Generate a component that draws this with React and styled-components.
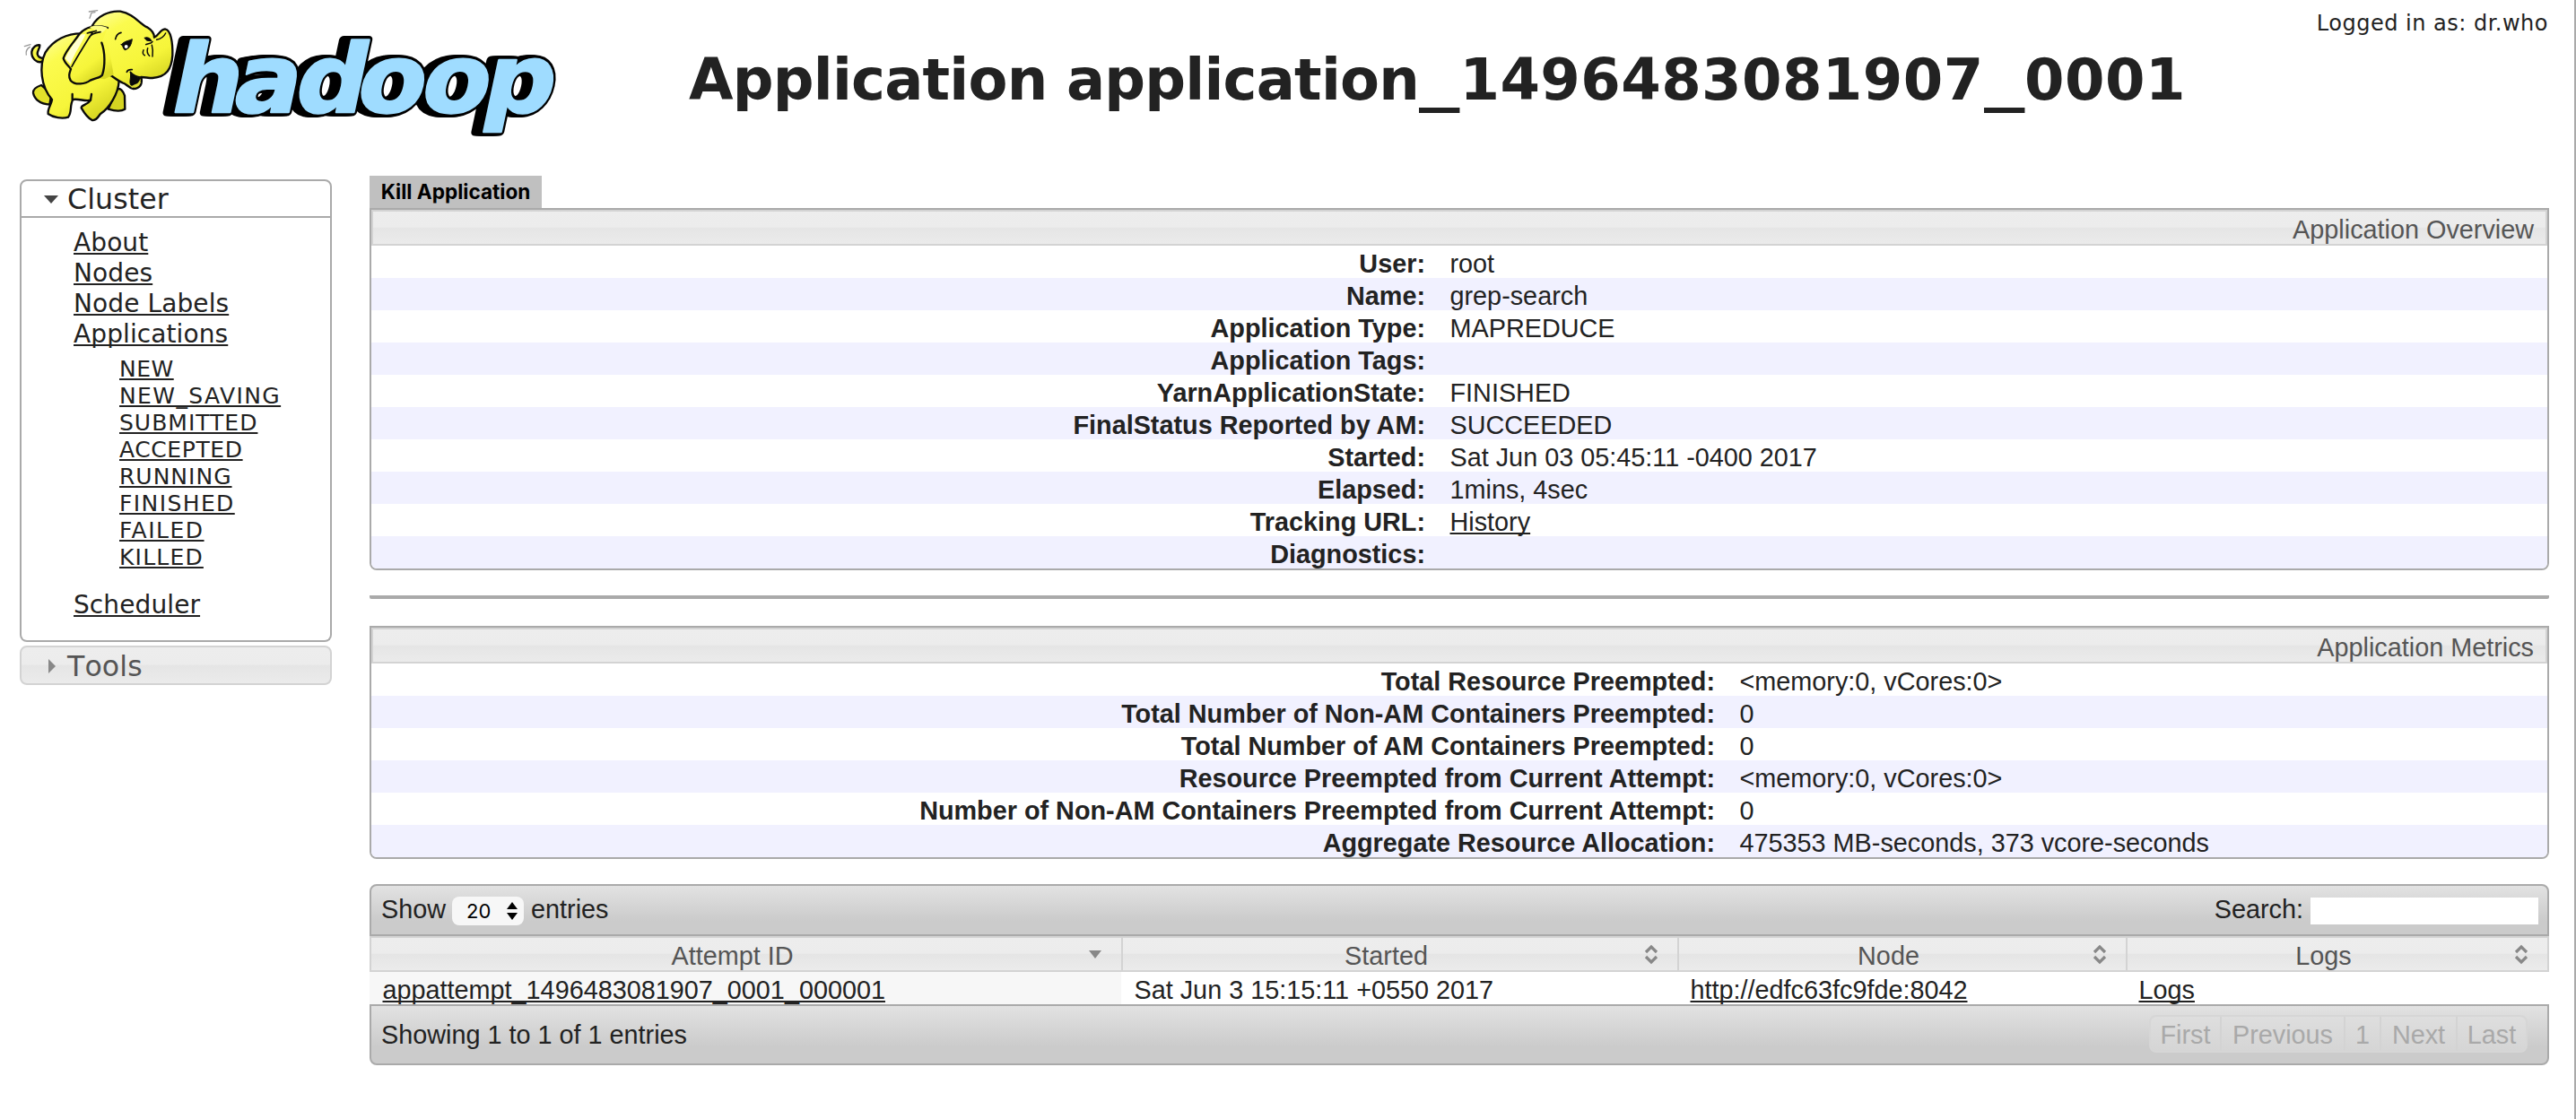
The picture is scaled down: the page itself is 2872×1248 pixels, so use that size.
import React from "react";
import styled, { createGlobalStyle, css } from "styled-components";

const GlobalStyle = createGlobalStyle`
  *, *::before, *::after { box-sizing: border-box; }
  body { margin: 0; background: #fff; color: #222; }
`;

const sans = `"Liberation Sans", Helvetica, Arial, sans-serif`;
const verdana = `"DejaVu Sans", Verdana, sans-serif`;
const system = `Inter, system-ui, sans-serif`;

const glass = css`
  background: linear-gradient(#ededed 0, #ececec 48%, #e5e5e5 50%, #ebebeb 100%);
`;
const soft = css`
  background: linear-gradient(#e2e2e2 0, #cbcbcb 72%, #cbcbcb 100%);
`;

const Page = styled.div`
  width: 2872px;
  height: 1248px;
  overflow: hidden;
  border-right: 2px solid #aaa;
  font: 28.8px/36px ${sans};
`;

const Header = styled.header`
  display: flex;
  align-items: flex-start;
  height: 196px;
  padding-right: 29px;
`;

const LogoArt = styled.svg`
  flex: none;
  width: 640px;
  height: 160px;
  margin-right: 128px;
`;

const Title = styled.h1`
  flex: 1;
  margin: 51px 0 0;
  font: bold 64px/76px ${verdana};
  letter-spacing: -0.8px;
  white-space: nowrap;
`;

const Digits = styled.span`
  letter-spacing: 0.4px;
`;

const Underscore = styled.span`
  display: inline-block;
  width: 45.5px;
  letter-spacing: 0;
  transform: scaleX(1.42);
  transform-origin: left;
`;

const LoggedIn = styled.div`
  margin-top: 12px;
  font: 24px/28px ${verdana};
  letter-spacing: 0.5px;
`;

const Columns = styled.div`
  display: flex;
  align-items: flex-start;
  gap: 42px;
  padding-left: 22px;
`;

const Sidebar = styled.nav`
  width: 348px;
  margin-top: 4px;
  font-family: ${verdana};
`;

const NavHeading = styled.div`
  display: flex;
  align-items: center;
  height: ${(p) => (p.$open ? 43 : 44)}px;
  padding: 1px 0 0 24px;
  border: 2px solid ${(p) => (p.$open ? "#aaa" : "#d3d3d3")};
  border-radius: ${(p) => (p.$open ? "8px 8px 0 0" : "8px")};
  margin-top: ${(p) => (p.$open ? 0 : 4)}px;
  font-size: 31.6px;
  font-kerning: none;
  line-height: 40px;
  letter-spacing: 0.1px;
  color: ${(p) => (p.$open ? "#222" : "#555")};
  ${(p) => !p.$open && glass}
`;

const NavArrow = styled.svg`
  width: 18px;
  height: 18px;
  margin: 0 9px 0 0;
  fill: ${(p) => p.$tone};
`;

const NavBody = styled.div`
  height: 473px;
  padding: 11px 0 0 58px;
  border: 2px solid #aaa;
  border-top: 0;
  border-radius: 0 0 8px 8px;
`;

const NavList = styled.ul`
  list-style: none;
  margin: 0;
  padding: 0;
  font-size: 28px;
  line-height: 34px;
  letter-spacing: 0.1px;
`;

const SubList = styled(NavList)`
  margin: 7px 0 21px;
  padding-left: 51px;
  font-size: 25px;
  line-height: 30px;
`;

const SubItem = styled.li`
  letter-spacing: ${(p) => p.$tracking}px;
`;

const Link = styled.a`
  color: inherit;
  text-decoration: underline;
  text-decoration-thickness: 2px;
  text-underline-offset: 2px;
  text-decoration-skip-ink: none;
`;

const Main = styled.main`
  width: 2430px;
`;

const KillButton = styled.button`
  display: block;
  width: 192px;
  height: 36px;
  padding: 0;
  border: 0;
  background: #c0c0c0;
  color: #000;
  font: bold 22.6px/34px ${system};
  text-align: center;
  white-space: nowrap;
`;

const Panel = styled.section`
  border: 2px solid #aaa;
  border-radius: 0 0 8px 8px;
  overflow: hidden;
`;

const PanelTitle = styled.div`
  height: 40px;
  padding: 2px 13px 0 0;
  border: 2px solid #d3d3d3;
  color: #555;
  line-height: 36px;
  text-align: right;
  ${glass}
`;

const InfoRow = styled.div`
  display: grid;
  grid-template-columns: ${(p) => p.$split}px 1fr;
  height: 36px;
  padding-top: 2px;
  background: #fff;
  &:nth-child(odd) { background: #f1f1ff; }
`;

const InfoLabel = styled.div`
  padding-right: 14px;
  font-weight: bold;
  text-align: right;
`;

const InfoValue = styled.div`
  padding-left: 13.5px;
`;

const Divider = styled.div`
  height: 4px;
  margin: 28px 0 30px;
  background: #aaa;
  border-radius: 0 0 2px 2px;
`;

const TableBox = styled.section`
  margin-top: 28px;
`;

const Bar = styled.div`
  display: flex;
  align-items: center;
  justify-content: space-between;
  height: ${(p) => (p.$bottom ? 68 : 58)}px;
  padding: 0 ${(p) => (p.$bottom ? 22 : 10)}px 0 11px;
  border: 2px solid #aaa;
  border-radius: ${(p) => (p.$bottom ? "0 0 8px 8px" : "8px 8px 0 0")};
  ${soft}
`;

const BarGroup = styled.label`
  display: flex;
  align-items: center;
  padding-bottom: 2px;
`;

const SelectBox = styled.span`
  display: flex;
  align-items: center;
  justify-content: space-between;
  width: 80px;
  height: 32px;
  margin: 4px 8px 0 7px;
  padding: 0 7px 0 16px;
  border-radius: 8px;
  background: #f7f7f7;
  color: #000;
  font: 22px/32px ${system};
`;

const SearchInput = styled.input`
  width: 254px;
  height: 30px;
  margin: 3px 0 0 8px;
  padding: 0;
  border: 0;
  background: #fff;
`;

const HeadRow = styled.div`
  display: grid;
  grid-template-columns: 838px 620px 500px 470px;
  height: 40px;
  border: 2px solid #d3d3d3;
  border-right: 0;
  ${glass}
`;

const HeadCell = styled.div`
  display: flex;
  align-items: center;
  height: 36px;
  padding: 2px 21px 0 6px;
  border-right: 2px solid #d3d3d3;
  color: #555;
  span { flex: 1; padding-top: 1px; text-align: center; }
`;

const SortIcon = styled.svg`
  width: 16px;
  height: 24px;
  margin-top: -2px;
  fill: none;
  stroke: #888;
  stroke-width: 3.2;
`;

const BodyRow = styled.div`
  display: grid;
  grid-template-columns: 838px 620px 500px 472px;
  grid-template-rows: 36px;
  height: 36px;
`;

const BodyCell = styled.div`
  height: 36px;
  padding: 2px 0 0 14.5px;
  background: ${(p) => (p.$sorted ? "#f7f7f7" : "#fff")};
`;

const Pager = styled.div`
  display: flex;
  height: 42px;
  margin-top: -2px;
  border: 2px solid #d6d6d6;
  border-radius: 8px;
  background: linear-gradient(#dedede, #d5d5d5);
  color: #a9a9a9;
`;

const PagerItem = styled.span`
  width: ${(p) => p.$w}px;
  line-height: 41px;
  text-align: center;
  & + & { border-left: 2px solid #d3d3d3; }
`;

function HadoopLogo() {
  const word = {
    x: "179 246 312 378.5 447.5 514",
    y: 125,
    fontFamily: "DejaVu Sans",
    fontWeight: "bold",
    fontSize: 106,
    strokeLinejoin: "round",
  };
  return (
    <LogoArt viewBox="0 0 640 160" role="img" aria-label="hadoop">
      <defs>
        <linearGradient id="hide" x1="0" y1="0" x2="0.6" y2="1">
          <stop offset="0" stopColor="#ffffa8" />
          <stop offset="0.3" stopColor="#fbfb4e" />
          <stop offset="0.75" stopColor="#f6f53a" />
          <stop offset="1" stopColor="#d9d824" />
        </linearGradient>
      </defs>
      <g transform="translate(26.8 0) skewX(-12) scale(1.04 1)">
        {[-9, -7, -5, -3, -1].map((dx) => (
          <text key={dx} {...word} aria-hidden="true" transform={`translate(${dx} 0)`} fill="#000" stroke="#000" strokeWidth="9">hadoop</text>
        ))}
        <text {...word} fill="#9fdcff" stroke="#9fdcff" strokeWidth="2.4">hadoop</text>
      </g>
      <g transform="translate(20 5) scale(0.33333)" fill="url(#hide)" stroke="#0a0a0a" strokeWidth="7" strokeLinejoin="round" strokeLinecap="round">
        <path d="M84 190C62 200 44 178 46 158C49 142 62 134 73 136C74 146 64 154 65 166C68 178 80 180 86 180" />
        <path d="M78 270C60 276 50 286 51 296C56 318 76 332 106 335L112 300Z" fill="#e2e12a" />
        <path d="M330 285C342 276 352 290 357 305L358 350C346 358 322 356 302 350Z" fill="#d6d522" />
        <path d="M215 97C165 96 118 118 92 160C70 205 76 275 114 318C112 336 98 348 101 366C118 378 148 384 168 377C182 360 172 338 184 318C204 314 226 326 243 320C232 338 212 334 212 346C220 360 230 378 248 387C262 390 268 376 276 366C304 348 336 300 338 255L300 120Z" />
        <path d="M182 300V318M246 300L243 320" fill="none" />
        <path d="M248 72C266 38 305 20 342 23C388 32 404 62 432 76C448 86 456 98 456 110C470 106 474 84 492 82C512 84 518 130 517 170C514 215 498 242 450 246C436 246 424 243 412 243C418 266 408 282 386 282C370 280 362 264 350 262C336 256 324 246 315 240L270 220L240 120Z" />
        <path d="M205 240L250 110L300 120L320 235L290 250Z" stroke="none" />
        <path d="M376 228C380 246 370 258 378 270C398 274 404 256 410 246C396 244 386 238 376 228Z" fill="#0a0a0a" strokeWidth="3" />
        <path d="M382 276C392 266 402 270 408 262" fill="none" stroke="#dbd93c" strokeWidth="5" />
        <path d="M364 226C368 216 376 218 382 218M412 243C400 244 384 236 376 226" fill="none" strokeWidth="5" />
        <path d="M300 78C262 66 228 74 206 98C188 126 162 150 152 180C156 196 170 206 177 216C172 230 168 240 176 254C192 272 226 266 242 254C258 246 274 246 282 236C292 206 292 160 280 128" />
        <path d="M300 78C280 68 256 68 240 76L280 96Z" stroke="none" fill="#fdfd86" />
        <path d="M180 208C194 182 214 150 236 114C242 100 260 94 276 92M232 96C242 92 252 92 262 88M238 112L250 92" fill="none" strokeWidth="5" />
        <path d="M158 180C172 150 192 124 212 100L226 100C214 130 190 160 176 200Z" fill="#ffffd2" stroke="none" />
        <path d="M326 116C328 104 336 96 345 94" fill="none" strokeWidth="5" />
        <path d="M346 134C356 122 370 122 382 116C380 132 374 148 358 152C350 148 354 140 346 134Z" fill="#0a0a0a" strokeWidth="3" />
        <circle cx="362" cy="141" r="6" fill="#fff" stroke="none" />
        <path d="M424 112C432 108 442 112 446 122L432 120Z" fill="#0a0a0a" strokeWidth="4" />
        <path d="M428 134C434 130 446 132 450 124M420 152C416 162 418 168 424 170M434 146C430 158 434 166 440 172M448 136C452 150 452 160 450 174M464 118C476 116 488 108 494 96" fill="none" strokeWidth="4.5" />
        <path d="M238 24L266 20M240 46L246 28L258 26M22 140L42 134M28 168C26 158 30 148 40 142" fill="none" stroke="#999" strokeWidth="4" />
      </g>
    </LogoArt>
  );
}

function Sort({ active }) {
  return (
    <SortIcon viewBox="0 0 16 24">
      {active ? (
        <path d="M1 8H15L8 17Z" fill="#888" stroke="none" />
      ) : (
        <path d="M2 10L8 4L14 10M2 15L8 21L14 15" />
      )}
    </SortIcon>
  );
}

const states = [
  ["NEW", 0.5],
  ["NEW_SAVING", 1.4],
  ["SUBMITTED", 1],
  ["ACCEPTED", 0.6],
  ["RUNNING", 1],
  ["FINISHED", 1.4],
  ["FAILED", 1.5],
  ["KILLED", 1.2],
];

const overview = [
  ["User", "root"],
  ["Name", "grep-search"],
  ["Application Type", "MAPREDUCE"],
  ["Application Tags", ""],
  ["YarnApplicationState", "FINISHED"],
  ["FinalStatus Reported by AM", "SUCCEEDED"],
  ["Started", "Sat Jun 03 05:45:11 -0400 2017"],
  ["Elapsed", "1mins, 4sec"],
  ["Tracking URL", <Link key="h">History</Link>],
  ["Diagnostics", ""],
];

const metrics = [
  ["Total Resource Preempted", "<memory:0, vCores:0>"],
  ["Total Number of Non-AM Containers Preempted", "0"],
  ["Total Number of AM Containers Preempted", "0"],
  ["Resource Preempted from Current Attempt", "<memory:0, vCores:0>"],
  ["Number of Non-AM Containers Preempted from Current Attempt", "0"],
  ["Aggregate Resource Allocation", "475353 MB-seconds, 373 vcore-seconds"],
];

function InfoPanel({ title, rows, split }) {
  return (
    <Panel>
      <PanelTitle>{title}</PanelTitle>
      {rows.map(([label, value]) => (
        <InfoRow key={label} $split={split}>
          <InfoLabel>{label}:</InfoLabel>
          <InfoValue>{value}</InfoValue>
        </InfoRow>
      ))}
    </Panel>
  );
}

export default function App() {
  return (
    <Page>
      <GlobalStyle />
      <Header>
        <HadoopLogo />
        <Title>
          Application application<Underscore>_</Underscore>
          <Digits>1496483081907</Digits>
          <Underscore>_</Underscore>
          <Digits>0001</Digits>
        </Title>
        <LoggedIn>Logged in as: dr.who</LoggedIn>
      </Header>
      <Columns>
        <Sidebar>
          <NavHeading $open>
            <NavArrow viewBox="0 0 18 18" $tone="#444"><path d="M1 5H17L9 14Z" /></NavArrow>
            Cluster
          </NavHeading>
          <NavBody>
            <NavList>
              <li><Link>About</Link></li>
              <li><Link>Nodes</Link></li>
              <li><Link>Node Labels</Link></li>
              <li>
                <Link>Applications</Link>
                <SubList>
                  {states.map(([name, tracking]) => (
                    <SubItem key={name} $tracking={tracking}><Link>{name}</Link></SubItem>
                  ))}
                </SubList>
              </li>
              <li><Link>Scheduler</Link></li>
            </NavList>
          </NavBody>
          <NavHeading>
            <NavArrow viewBox="0 0 18 18" $tone="#888"><path d="M6 1V17L14 9Z" /></NavArrow>
            Tools
          </NavHeading>
        </Sidebar>
        <Main>
          <KillButton>Kill Application</KillButton>
          <InfoPanel title="Application Overview" rows={overview} split={1189} />
          <Divider />
          <InfoPanel title="Application Metrics" rows={metrics} split={1512} />
          <TableBox>
            <Bar>
              <BarGroup>
                Show
                <SelectBox>
                  20
                  <svg width="12" height="20" viewBox="0 0 12 20"><path d="M0 8L6 0L12 8ZM0 12H12L6 20Z" /></svg>
                </SelectBox>
                entries
              </BarGroup>
              <BarGroup>
                Search:
                <SearchInput />
              </BarGroup>
            </Bar>
            <HeadRow>
              <HeadCell><span>Attempt ID</span><Sort active /></HeadCell>
              <HeadCell><span>Started</span><Sort /></HeadCell>
              <HeadCell><span>Node</span><Sort /></HeadCell>
              <HeadCell><span>Logs</span><Sort /></HeadCell>
            </HeadRow>
            <BodyRow>
              <BodyCell $sorted><Link>appattempt_1496483081907_0001_000001</Link></BodyCell>
              <BodyCell>Sat Jun 3 15:15:11 +0550 2017</BodyCell>
              <BodyCell><Link>http://edfc63fc9fde:8042</Link></BodyCell>
              <BodyCell><Link>Logs</Link></BodyCell>
            </BodyRow>
            <Bar $bottom>
              <span>Showing 1 to 1 of 1 entries</span>
              <Pager>
                <PagerItem $w={77}>First</PagerItem>
                <PagerItem $w={138}>Previous</PagerItem>
                <PagerItem $w={40}>1</PagerItem>
                <PagerItem $w={85}>Next</PagerItem>
                <PagerItem $w={78}>Last</PagerItem>
              </Pager>
            </Bar>
          </TableBox>
        </Main>
      </Columns>
    </Page>
  );
}
